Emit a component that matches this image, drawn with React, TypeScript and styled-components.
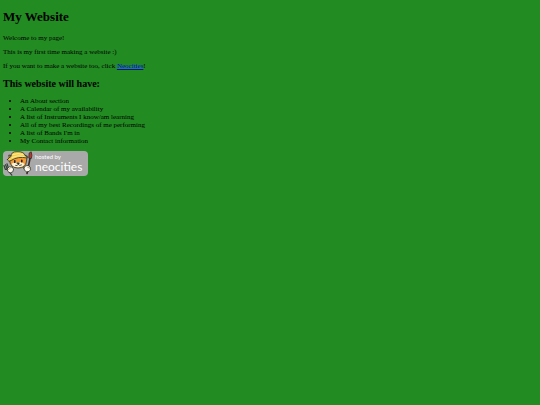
import React from 'react';
import styled, { createGlobalStyle } from 'styled-components';

const GlobalStyle = createGlobalStyle`
  body {
    margin: 0;
    background: #228b22;
    color: #000;
    font-family: "Liberation Serif", "Times New Roman", serif;
    font-size: 7px;
    line-height: 8px;
  }
`;

const Page = styled.main`
  padding: 8px 3px;
`;

const Title = styled.h1`
  margin: 0 0 8px;
  font-size: 13px;
  line-height: 18px;
`;

const Paragraph = styled.p`
  margin: 0 0 6px;
`;

const TextLink = styled.a`
  color: #0000ee;
`;

const Subtitle = styled.h2`
  margin: 8px 0 7px;
  font-size: 10px;
  line-height: 12px;
`;

const Plans = styled.ul`
  margin: 0 0 6px;
  padding-left: 17px;
`;

const HostBadge = styled.a`
  display: inline-flex;
  align-items: center;
  gap: 1px;
  height: 25px;
  padding-right: 6px;
  border-radius: 4px;
  background: #a9a9a9;
  color: #fff;
  font-family: Lato, sans-serif;
  text-decoration: none;
`;

const BadgeText = styled.span`
  display: flex;
  flex-direction: column;
`;

const HostedBy = styled.span`
  font-size: 6px;
  line-height: 7px;
`;

const BrandName = styled.span`
  font-size: 12px;
  line-height: 14px;
`;

const Mascot = () => (
  <svg width="31" height="25" viewBox="0 0 31 25" aria-hidden="true">
    <g stroke="#253328" strokeWidth="0.8" strokeLinejoin="round" strokeLinecap="round">
      <path d="M6.5 9 L5.8 4 L10 5 L20 4 L24.3 5 L23.3 11 Q23 17 15 17 Q7 17 6.5 9Z" fill="#f29a38" />
      <path d="M8.5 13 Q10.5 10.5 14.5 12 Q18.5 10 21.5 13 Q20 16.3 15 16.3 Q10 16.3 8.5 13Z" fill="#fff4d9" stroke="none" />
      <path d="M4.5 8.5 Q6 6.5 8 5.5 Q8 0.5 14 0.7 Q21 0.3 22.5 5 Q25 6 24 7 Q15 5 8 9.5 Q5 11 4.5 8.5Z" fill="#f5cf50" />
      <path d="M10 3.5 Q15 1.5 20 3.5 M9 6.4 Q15 3.6 21 5.4" fill="none" stroke="#fff0a0" />
      <path d="M11.8 9.8 V11.4 M18.8 9.2 V10.8" stroke="#111" strokeWidth="1.4" />
      <path d="M14.2 12 H16.4 L15.3 13.2Z" fill="#251c17" />
      <path d="M12.6 14.5 Q14.6 15.3 15.3 13.4 Q16.4 15.3 18.5 14" fill="none" />
      <path d="M1 14.5 L2.3 18.3 Q5 19 5.3 16.6 L4 12.8 M2.5 13.7 L4.6 18.6 L8.8 24.2" fill="none" stroke="#344239" strokeWidth="1.2" />
      <path d="M4.3 17.5 Q6 14.7 9 16 L10.6 18 Q10.7 21.6 7.6 21.8 Q3.8 21.3 4.3 17.5Z" fill="#fff8eb" />
      <path d="M5.2 18.5 L7 17.5" fill="none" stroke="#b39372" />
      <path d="M24 22.5 L27.2 6.5" stroke="#3a2924" strokeWidth="1.6" />
      <path d="M25.8 6.7 L26.2 2 L28.2 0.8 Q29.6 4.5 28.4 7.3Z" fill="#c8302b" />
      <path d="M20.8 17 Q22 13.9 25 14.4 Q28 15.5 27.5 18.8 Q26.4 21.2 23.6 20.8 Q20.8 20 20.8 17Z" fill="#fff8eb" />
      <path d="M24.5 16.2 L26.3 17" fill="none" stroke="#b39372" />
    </g>
  </svg>
);

const plans = [
  'An About section',
  'A Calendar of my availability',
  'A list of Instruments I know/am learning',
  'All of my best Recordings of me performing',
  "A list of Bands I'm in",
  'My Contact information',
];

export default function App() {
  return (
    <>
      <GlobalStyle />
      <Page>
        <Title>My Website</Title>
        <Paragraph>Welcome to my page!</Paragraph>
        <Paragraph>This is my first time making a website :)</Paragraph>
        <Paragraph>
          If you want to make a website too, click <TextLink href="https://neocities.org">Neocities</TextLink>!
        </Paragraph>
        <Subtitle>This website will have:</Subtitle>
        <Plans>
          {plans.map((plan) => (
            <li key={plan}>{plan}</li>
          ))}
        </Plans>
        <HostBadge href="https://neocities.org">
          <Mascot />
          <BadgeText>
            <HostedBy>hosted by</HostedBy>
            <BrandName>neocities</BrandName>
          </BadgeText>
        </HostBadge>
      </Page>
    </>
  );
}
